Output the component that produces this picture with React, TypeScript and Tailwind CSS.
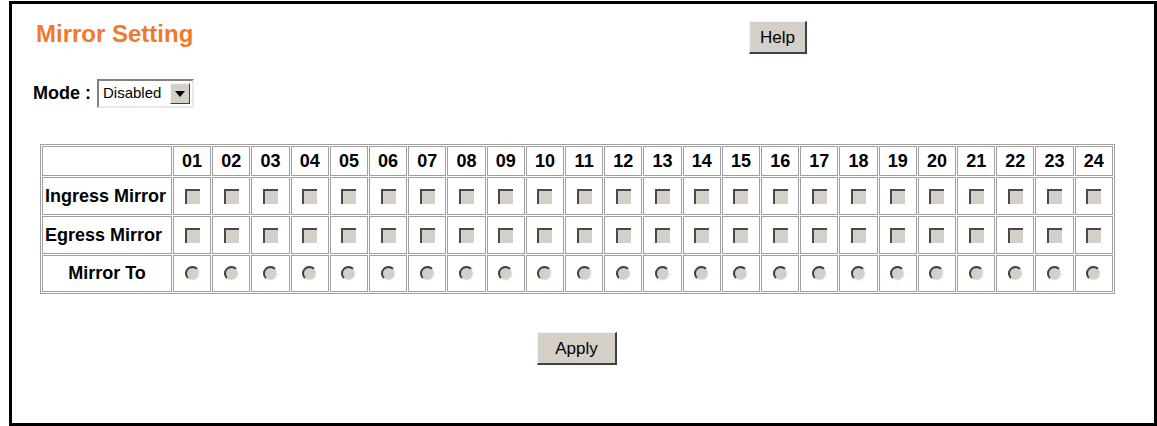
import React from "react";

const ports = Array.from({ length: 24 }, (_, i) => String(i + 1).padStart(2, "0"));

// old-style grey checkbox (disabled look)
const Check = () => (
  <div className="mx-auto w-[15px] h-[15px] bg-[#d4d0c8] border-t-2 border-l-2 border-t-[#4a4a4a] border-l-[#4a4a4a]" />
);

const Radio = () => (
  <svg width="15" height="15" viewBox="0 0 15 15" className="mx-auto block">
    <circle cx="7.5" cy="7.5" r="6.5" fill="#d4d0c8" />
    <path d="M12.1 2.9 A6.5 6.5 0 0 0 2.9 12.1" fill="none" stroke="#404040" strokeWidth="2" />
    <path d="M2.9 12.1 A6.5 6.5 0 0 0 12.1 2.9" fill="none" stroke="#e8e8e8" strokeWidth="1" />
  </svg>
);

const Button = ({ label, w }: { label: string; w: string }) => (
  <button
    className={`${w} h-[33px] bg-[#d4d0c8] border-t border-l border-t-[#f4f4f4] border-l-[#f4f4f4] border-b-2 border-r-2 border-b-[#404040] border-r-[#404040] text-[17px] text-black leading-none`}
  >
    {label}
  </button>
);

export default function App() {
  return (
    <div className="bg-white w-[1157px] h-[426px] font-['Liberation_Sans',Arial,sans-serif]">
      <div className="ml-[9px] mt-[1px] w-[1148px] h-[425px] border-[3px] border-black flex flex-col">
        <div className="flex items-start pt-[16px] pl-[24px]">
          <h1 className="w-[713px] text-[24px] font-bold text-[#f07a28] leading-[1.15]">
            Mirror Setting
          </h1>
          <div className="mt-[1px]">
            <Button label="Help" w="w-[58px]" />
          </div>
        </div>

        <div className="flex items-center gap-[6px] pl-[21px] mt-[25px] h-[29px]">
          <span className="text-[18px] font-bold text-black">Mode :</span>
          <div className="w-[97px] h-[29px] flex items-center bg-white border-2 border-t-[#808080] border-l-[#808080] border-b-[#e8e8e8] border-r-[#e8e8e8]">
            <span className="flex-1 pl-[4px] text-[15px] text-black">Disabled</span>
            <div className="w-[20px] h-[21px] mr-[2px] bg-[#d4d0c8] border border-t-[#f4f4f4] border-l-[#f4f4f4] border-b-[#404040] border-r-[#404040] flex items-center justify-center">
              <div className="w-0 h-0 border-l-[5px] border-r-[5px] border-t-[6px] border-l-transparent border-r-transparent border-t-black" />
            </div>
          </div>
        </div>

        <div className="ml-[28px] mt-[36px]">
          <table className="w-[1075px] border-separate border-spacing-[1px] border border-[#a0a0a0] table-fixed">
            <thead>
              <tr className="h-[30px]">
                <th className="w-[130px] border border-[#a0a0a0]" />
                {ports.map((p) => (
                  <th key={p} className="border border-[#a0a0a0] text-[18px] font-bold text-black">
                    {p}
                  </th>
                ))}
              </tr>
            </thead>
            <tbody>
              {["Ingress Mirror", "Egress Mirror"].map((label) => (
                <tr key={label} className="h-[38px]">
                  <td className="border border-[#a0a0a0] text-[18px] font-bold text-black pl-[2px] whitespace-nowrap">
                    {label}
                  </td>
                  {ports.map((p) => (
                    <td key={p} className="border border-[#a0a0a0]">
                      <Check />
                    </td>
                  ))}
                </tr>
              ))}
              <tr className="h-[37px]">
                <td className="border border-[#a0a0a0] text-[18px] font-bold text-black text-center">
                  Mirror To
                </td>
                {ports.map((p) => (
                  <td key={p} className="border border-[#a0a0a0]">
                    <Radio />
                  </td>
                ))}
              </tr>
            </tbody>
          </table>
        </div>

        <div className="flex mt-[38px] pl-[525px]">
          <Button label="Apply" w="w-[80px]" />
        </div>
      </div>
    </div>
  );
}
